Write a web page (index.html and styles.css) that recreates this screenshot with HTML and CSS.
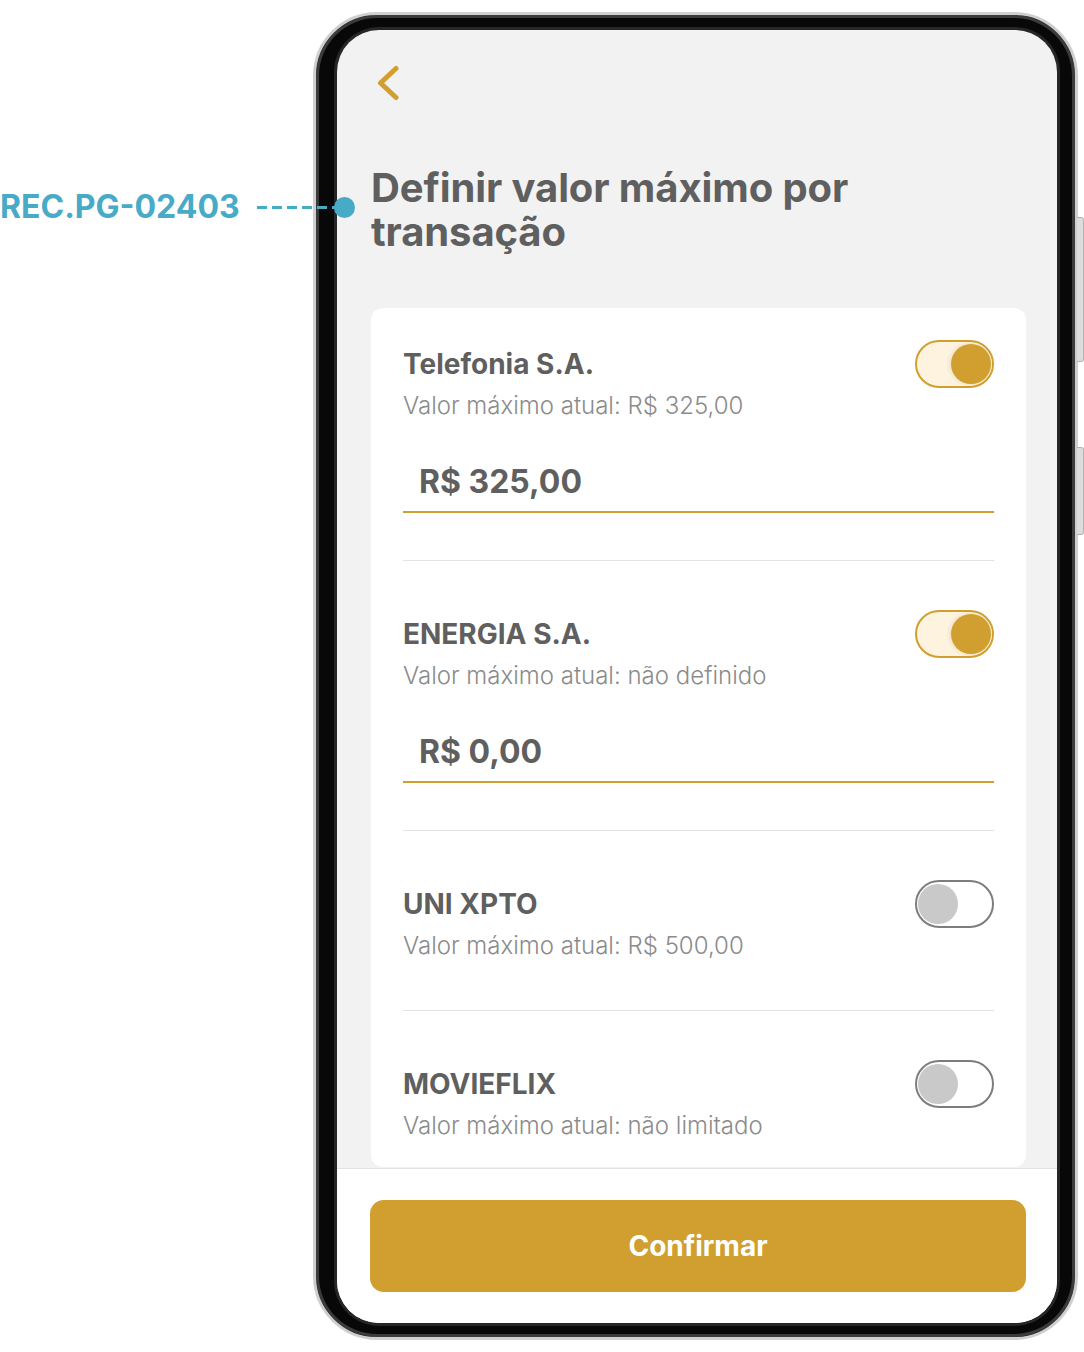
FILE: index.html
```html
<!DOCTYPE html>
<html lang="pt-BR">
<head>
  <meta charset="UTF-8">
  <title>Definir valor máximo por transação</title>
  <link rel="stylesheet" href="styles.css">
</head>
<body>
  <div class="stage">
    <div class="tag">
      <span class="tag-label">REC.PG-02403</span>
      <span class="tag-line"></span>
      <span class="tag-dot"></span>
    </div>

    <div class="phone">
      <div class="screen">
        <div class="scroll">
          <div class="topbar">
            <button class="back" aria-label="Voltar">
              <svg width="24" height="36" viewBox="0 0 24 36">
                <path d="M20 3.5 L4.5 18 L20 32.5" fill="none" stroke="#d09f2f" stroke-width="5" stroke-linecap="round" stroke-linejoin="round"/>
              </svg>
            </button>
          </div>

          <h1>Definir valor máximo por<br>transação</h1>

          <div class="card">
            <div class="item item--edit">
              <div class="item-head">
                <span class="item-name">Telefonia S.A.</span>
                <span class="switch on"></span>
              </div>
              <p class="item-sub">Valor máximo atual: R$ 325,00</p>
              <div class="amount">R$ 325,00</div>
            </div>

            <div class="item item--edit">
              <div class="item-head">
                <span class="item-name">ENERGIA S.A.</span>
                <span class="switch on"></span>
              </div>
              <p class="item-sub">Valor máximo atual: não definido</p>
              <div class="amount">R$ 0,00</div>
            </div>

            <div class="item">
              <div class="item-head">
                <span class="item-name">UNI XPTO</span>
                <span class="switch"></span>
              </div>
              <p class="item-sub">Valor máximo atual: R$ 500,00</p>
            </div>

            <div class="item">
              <div class="item-head">
                <span class="item-name">MOVIEFLIX</span>
                <span class="switch"></span>
              </div>
              <p class="item-sub">Valor máximo atual: não limitado</p>
            </div>
          </div>
        </div>

        <div class="footer">
          <button class="confirm">Confirmar</button>
        </div>
      </div>
    </div>
  </div>
</body>
</html>
```

FILE: styles.css
```css
* {
  box-sizing: border-box;
}

body {
  margin: 0;
  font-family: Inter, "Noto Sans", Arial, sans-serif;
  background: white;
  color: #5f5f5f;
}

.stage {
  display: flex;
  align-items: flex-start;
  padding-top: 12px;
}

/* annotation on the left */
.tag {
  position: relative;
  z-index: 2;
  width: 313px;
  height: 40px;
  margin-top: 175px;
  margin-right: -313px;
  display: flex;
  align-items: center;
}

.tag-label {
  font-size: 32px;
  line-height: 40px;
  font-weight: 700;
  color: #47abc8;
  white-space: nowrap;
}

.tag-line {
  width: 80px;
  flex: none;
  height: 3px;
  margin-left: 17px;
  background: repeating-linear-gradient(90deg, #47abc8 0 10px, transparent 10px 15px);
}

.tag-dot {
  position: absolute;
  left: 334px;
  top: 50%;
  width: 21px;
  height: 21px;
  margin-top: -10px;
  border-radius: 50%;
  background: #47abc8;
}

/* phone frame */
.phone {
  position: relative;
  margin-left: 313px;
  width: 765px;
  height: 1328px;
  padding: 15px 18px 14px 21px;
  border: 3px solid #cfcfcf;
  border-radius: 64px;
  background: #080808;
  box-shadow: inset 0 0 0 3px #3b3b3b;
}

.phone::before,
.phone::after {
  content: "";
  position: absolute;
  right: -9px;
  width: 6px;
  background: #dcdcdc;
  border: 1px solid #b4b4b4;
  border-left: none;
  border-radius: 0 3px 3px 0;
}

.phone::before {
  top: 202px;
  height: 143px;
}

.phone::after {
  top: 432px;
  height: 86px;
}

.screen {
  height: 100%;
  border-radius: 42px;
  overflow: hidden;
  display: flex;
  flex-direction: column;
  background: #f2f2f2;
  box-shadow: 0 0 0 3px #262626;
}

.scroll {
  flex: 1;
  overflow: hidden;
  padding: 0 31px 0 34px;
}

.topbar {
  height: 106px;
  display: flex;
  align-items: center;
}

.back {
  margin-left: 5px;
  padding: 0;
  border: none;
  background: none;
  display: flex;
  cursor: pointer;
}

h1 {
  margin: 30px 0 0;
  font-size: 40px;
  line-height: 44px;
  font-weight: 700;
  letter-spacing: -0.1px;
  color: #5f5f5f;
}

.card {
  margin-top: 54px;
  padding: 32px 32px 27px;
  background: white;
  border-radius: 12px;
}

.item {
  padding: 49px 0 50px;
  border-bottom: 1px solid #e3e3e3;
}

.item--edit {
  padding-bottom: 47px;
}

.item:first-child {
  padding-top: 0;
}

.item:last-child {
  padding-bottom: 0;
  border-bottom: none;
}

.item-head {
  display: flex;
  justify-content: space-between;
  align-items: center;
  height: 48px;
}

.item-name {
  font-size: 28px;
  font-weight: 700;
  color: #5f5f5f;
}

.item-sub {
  margin: 4px 0 0;
  font-size: 24px;
  line-height: 28px;
  font-weight: 300;
  color: #8b8b8b;
}

.amount {
  margin-top: 20px;
  padding: 24px 16px 11px;
  font-size: 32px;
  line-height: 36px;
  font-weight: 700;
  color: #5f5f5f;
  border-bottom: 2px solid #d09f2f;
}

/* toggle */
.switch {
  position: relative;
  width: 79px;
  height: 48px;
  border: 2px solid #7d7d7d;
  border-radius: 24px;
  background: white;
}

.switch::after {
  content: "";
  position: absolute;
  top: 2px;
  left: 1px;
  width: 40px;
  height: 40px;
  border-radius: 50%;
  background: #c9c9c9;
}

.switch.on {
  border-color: #d09f2f;
  background: #fdf3df;
}

.switch.on::after {
  left: auto;
  right: 1px;
  background: #d09f2f;
  box-shadow: 0 0 0 1px #f6e8c6, -2px 0 4px rgba(0, 0, 0, 0.08);
}

.footer {
  height: 155px;
  padding: 31px 31px 0 33px;
  background: white;
  border-top: 1px solid #e2e2e2;
}

.confirm {
  width: 100%;
  height: 92px;
  border: none;
  border-radius: 14px;
  background: #d09f2f;
  color: white;
  font-family: inherit;
  font-size: 28px;
  font-weight: 700;
  cursor: pointer;
}
```
